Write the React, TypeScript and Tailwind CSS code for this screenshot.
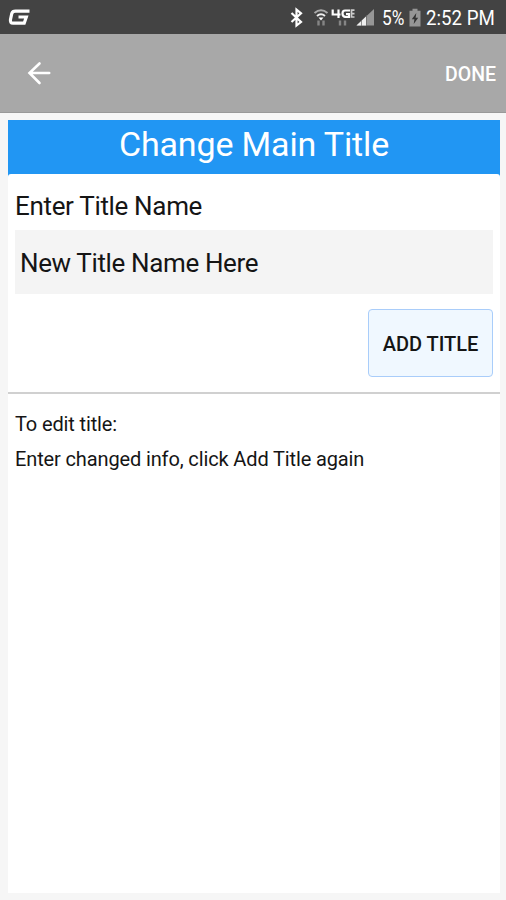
import { useState } from 'react'

function CarrierLogo() {
  return (
    <svg className="h-[34px] w-[24px]" viewBox="0 0 24 34" fill="none">
      <path d="M23.500 11.200H9.500Q6.500 11.200 5.800 13.500L4.500 19.500Q3.900 23.200 7 23.200H18.200L20.300 17H12.500" stroke="white" strokeWidth="3.200" />
    </svg>
  )
}

function StatusIcons() {
  return (
    <svg className="h-[34px] w-[90px] shrink-0" viewBox="0 0 90 34" fill="none">
      {/* bluetooth */}
      <path d="M2.500 13L12 22L7.500 25.500V9.500L12 13.300L2.500 22" stroke="white" strokeWidth="2.200" />
      {/* wifi */}
      <path d="M25.500 13Q32 7.500 38.500 13" stroke="#aaa" strokeWidth="2" />
      <path d="M28 16Q32 12.500 36 16" stroke="#eee" strokeWidth="2" />
      <path d="M29.500 17.500H34.500L32 20.500Z" fill="white" />
      <path d="M29.500 20.500V25.500M34.500 20.500V25.500" stroke="#858585" strokeWidth="2.400" />
      {/* 4G LTE */}
      <path d="M43.700 9.500V14.500H51.500M49.500 9.500V18" stroke="white" strokeWidth="2.200" />
      <path d="M61 10.500H56Q53.500 10.500 53.500 13.500T56 16.800H60V14H57" stroke="white" strokeWidth="2.200" />
      <path d="M65.500 10.200H62.500V17H65.500M62.500 13.600H65.500" stroke="#ccc" strokeWidth="1.700" />
      <path d="M51 20.500V25.500M56 20.500V25.500" stroke="#858585" strokeWidth="2.400" />
      {/* signal */}
      <path d="M67.500 25.500L85 9V25.500Z" fill="#969696" />
      <path d="M67.500 25.500L77 16.500V25.500Z" fill="#eee" />
      <path d="M72.500 20V26M77.500 15V26" stroke="#666" strokeWidth="0.700" />
    </svg>
  )
}

function BatteryIcon() {
  return (
    <svg className="h-[34px] w-[12px] shrink-0" viewBox="0 0 12 34">
      <path d="M3.500 8.800H8.500V10.800H11.500V26.500H.5V10.800H3.500Z" fill="#969696" />
      <path d="M7.300 13L2.800 19.300H5.400L4.700 24L9.200 17.700H6.600Z" fill="#333" />
    </svg>
  )
}

export default function App() {
  const [title, setTitle] = useState('New Title Name Here')

  return (
    <div className="flex h-[900px] w-[506px] flex-col overflow-hidden bg-[#f6f6f6] font-['Roboto',sans-serif] text-[#151515]">
      {/* Status bar */}
      <div className="flex h-[34px] shrink-0 items-center bg-[#434343] pl-[6px] text-white">
        <CarrierLogo />
        <div className="ml-auto flex h-[34px] w-[217px] items-center whitespace-nowrap text-[21px] leading-[34px]">
          <StatusIcons />
          <div className="ml-[3px] w-[27px] shrink-0">
            <span className="inline-block origin-left scale-x-[0.82] pt-[2px]">5%</span>
          </div>
          <BatteryIcon />
          <span className="ml-[5px] inline-block origin-left scale-x-[0.89] pt-[2px]">2:52 PM</span>
        </div>
      </div>

      {/* App bar */}
      <header className="flex h-[79px] shrink-0 items-center justify-between border-b border-[#999] bg-[#a8a8a8] pr-[10px] pl-[27px] text-white">
        <button aria-label="Back">
          <svg className="h-[24px] w-[24px]" viewBox="0 0 24 24" fill="none" stroke="white" strokeWidth="2.600" strokeLinecap="round">
            <path d="M22.200 12H3M12.500 2.500L2.500 12L12.500 22" />
          </svg>
        </button>
        <button className="pt-[4px] text-[19.500px] font-medium">DONE</button>
      </header>

      <main className="mx-[8px] mt-[7px] mr-[6px] mb-[7px] flex flex-1 flex-col bg-white">
        <div className="bg-[#2196f3]">
          <h1 className="h-[54px] text-center text-[34px] leading-[49px] tracking-[-0.15px] text-white">Change Main Title</h1>
          <div className="h-[3px] rounded-t-[3px] bg-white" />
        </div>

        <div className="flex h-[217px] flex-col border-b-2 border-[#d0d0d0] px-[7px]">
          <label htmlFor="title" className="mt-[13px] h-[40px] text-[26px] leading-[33px] tracking-[-0.33px]">
            Enter Title Name
          </label>
          <input
            id="title"
            value={title}
            onChange={(e) => setTitle(e.target.value)}
            className="h-[64px] w-full bg-[#f4f4f4] px-[5px] pt-[2px] text-[26px] tracking-[-0.37px] outline-none"
          />
          <button className="mt-[15px] h-[68px] w-[125px] self-end rounded-[4px] border border-[#a9cdfa] bg-[#f0f8ff] pt-[2px] text-[20px] font-medium tracking-[-0.05px]">
            ADD TITLE
          </button>
        </div>

        <div className="px-[7px] pt-[13px] text-[20px] leading-[35px] tracking-[-0.13px]">
          <p>To edit title:</p>
          <p>Enter changed info, click Add Title again</p>
        </div>
      </main>
    </div>
  )
}
